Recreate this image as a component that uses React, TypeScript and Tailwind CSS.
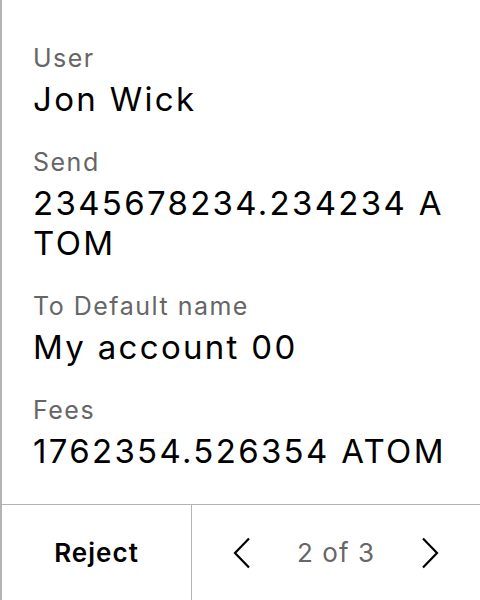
import React from "react";

const rows = [
  { label: "User", value: "Jon Wick" },
  { label: "Send", value: "2345678234.234234 ATOM" },
  { label: "To Default name", value: "My account 00" },
  { label: "Fees", value: "1762354.526354 ATOM" },
];

export default function App() {
  return (
    <div className="w-[480px] h-[600px] bg-white border-l-2 border-[#b3b3b3] flex flex-col font-['Inter','Noto_Sans',sans-serif]">
      <div className="flex-1 pt-[42px] pl-[31px] pr-[30px] flex flex-col gap-[27px]">
        {rows.map((r) => (
          <div key={r.label} className="flex flex-col">
            <div className="text-[25px] leading-[32px] tracking-[0.06em] text-[#666666]">{r.label}</div>
            <div className="mt-[5px] text-[33px] leading-[40px] tracking-[0.07em] text-black break-all">{r.value}</div>
          </div>
        ))}
      </div>
      <div className="h-[96px] border-t border-[#b3b3b3] flex">
        <div className="w-[190px] flex items-center justify-center border-r border-[#b3b3b3]">
          <span className="text-[26px] font-semibold tracking-[0.04em] text-black">Reject</span>
        </div>
        <div className="flex-1 flex items-center justify-center gap-[46px]">
          <svg width="18" height="32" viewBox="0 0 18 32" fill="none">
            <path d="M16 1.5 L2 16 L16 30.5" stroke="black" strokeWidth="2.2" />
          </svg>
          <span className="text-[26px] tracking-[0.04em] text-[#666666]">2 of 3</span>
          <svg width="18" height="32" viewBox="0 0 18 32" fill="none">
            <path d="M2 1.5 L16 16 L2 30.5" stroke="black" strokeWidth="2.2" />
          </svg>
        </div>
      </div>
    </div>
  );
}
